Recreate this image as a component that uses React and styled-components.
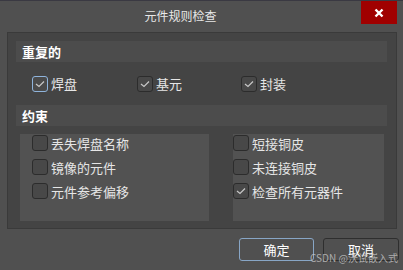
import React from "react";
import styled, { createGlobalStyle } from "styled-components";

const Global = createGlobalStyle`
  body {
    margin: 0;
    background: #505050;
    font-family: "Noto Sans CJK SC", "Noto Sans", sans-serif;
  }
`;

const Window = styled.div`
  position: relative;
  width: 403px;
  height: 270px;
  box-sizing: border-box;
  border-top: 1px solid #3a3942;
  background: #505050;
  display: flex;
  flex-direction: column;
  overflow: hidden;
`;

const TitleBar = styled.div`
  height: 31px;
  display: flex;
  align-items: flex-start;
`;

const Title = styled.div`
  flex: 1;
  text-align: center;
  color: #e8e8e8;
  font-size: 12px;
  line-height: 30px;
`;

const Close = styled.div`
  width: 36px;
  height: 23px;
  margin-right: 6px;
  background: #a00000;
  display: flex;
  align-items: center;
  justify-content: center;
`;

const Panel = styled.div`
  margin: 0 6px 0 7px;
  height: 197px;
  box-sizing: border-box;
  border: 1px solid #3a3a3a;
  background: #444444;
  padding: 8px 9px 7px 8px;
  display: flex;
  flex-direction: column;
`;

const Header = styled.div`
  height: 21px;
  background: #4c4c4c;
  color: #ffffff;
  font-weight: bold;
  font-size: 13px;
  line-height: 21px;
  padding-left: 6px;
`;

const TopRow = styled.div`
  height: 43px;
  display: grid;
  grid-template-columns: 105px 104px auto;
  align-items: center;
  padding-left: 16px;
`;

const SubRow = styled.div`
  margin-top: 8px;
  display: flex;
  gap: 24px;
  padding-left: 4px;
  flex: 1;
`;

const SubPanel = styled.div`
  width: ${(p) => p.$w}px;
  background: #525252;
  padding: 1px 0 0 ${(p) => p.$pad}px;
  box-sizing: border-box;
  display: flex;
  flex-direction: column;
  gap: 8px;
`;

const Item = styled.label`
  display: flex;
  align-items: center;
  gap: 3px;
  color: #e6e6e6;
  font-size: 13px;
  height: 16px;
  white-space: nowrap;
`;

const Box = styled.span`
  width: 14px;
  height: 14px;
  border: 1px solid ${(p) => (p.$focus ? "#8fb4dc" : "#2c2c2c")};
  border-radius: 3px;
  background: ${(p) => (p.$focus ? "#4a4a4a" : "#484848")};
  display: flex;
  align-items: center;
  justify-content: center;
  flex: none;
`;

const Footer = styled.div`
  display: flex;
  justify-content: flex-end;
  gap: 9px;
  padding: 9px 4px 0 0;
`;

const Button = styled.div`
  width: ${(p) => p.$w}px;
  height: 23px;
  box-sizing: border-box;
  border: 1px solid ${(p) => (p.$primary ? "#88a6c6" : "#2e2e2e")};
  border-radius: 3px;
  color: #ffffff;
  font-size: 13px;
  display: flex;
  align-items: center;
  justify-content: center;
`;

const Mark = styled.div`
  position: absolute;
  left: 310px;
  top: 249px;
  color: rgba(205, 205, 205, 0.75);
  font-size: 10px;
  white-space: nowrap;
`;

function Check({ checked, focus, label }) {
  return (
    <Item>
      <Box $focus={focus}>
        {checked && (
          <svg width="10" height="8" viewBox="0 0 10 8">
            <path d="M1 4 L4 6.5 L9 1.5" fill="none" stroke="#c8c8c8" strokeWidth="1.2" />
          </svg>
        )}
      </Box>
      {label}
    </Item>
  );
}

export default function App() {
  return (
    <Window>
      <Global />
      <TitleBar>
        <Title>元件规则检查</Title>
        <Close>
          <svg width="10" height="10" viewBox="0 0 10 10">
            <path d="M1.5 1.5 L8.5 8.5 M8.5 1.5 L1.5 8.5" stroke="#fff" strokeWidth="2.4" />
          </svg>
        </Close>
      </TitleBar>
      <Panel>
        <Header>重复的</Header>
        <TopRow>
          <Check checked focus label="焊盘" />
          <Check checked label="基元" />
          <Check checked label="封装" />
        </TopRow>
        <Header>约束</Header>
        <SubRow>
          <SubPanel $w={189} $pad={12}>
            <Check label="丢失焊盘名称" />
            <Check label="镜像的元件" />
            <Check label="元件参考偏移" />
          </SubPanel>
          <SubPanel $w={151} $pad={0}>
            <Check label="短接铜皮" />
            <Check label="未连接铜皮" />
            <Check checked label="检查所有元器件" />
          </SubPanel>
        </SubRow>
      </Panel>
      <Footer>
        <Button $primary $w={75}>确定</Button>
        <Button $w={76}>取消</Button>
      </Footer>
      <Mark>CSDN @沃试嵌入式</Mark>
    </Window>
  );
}
